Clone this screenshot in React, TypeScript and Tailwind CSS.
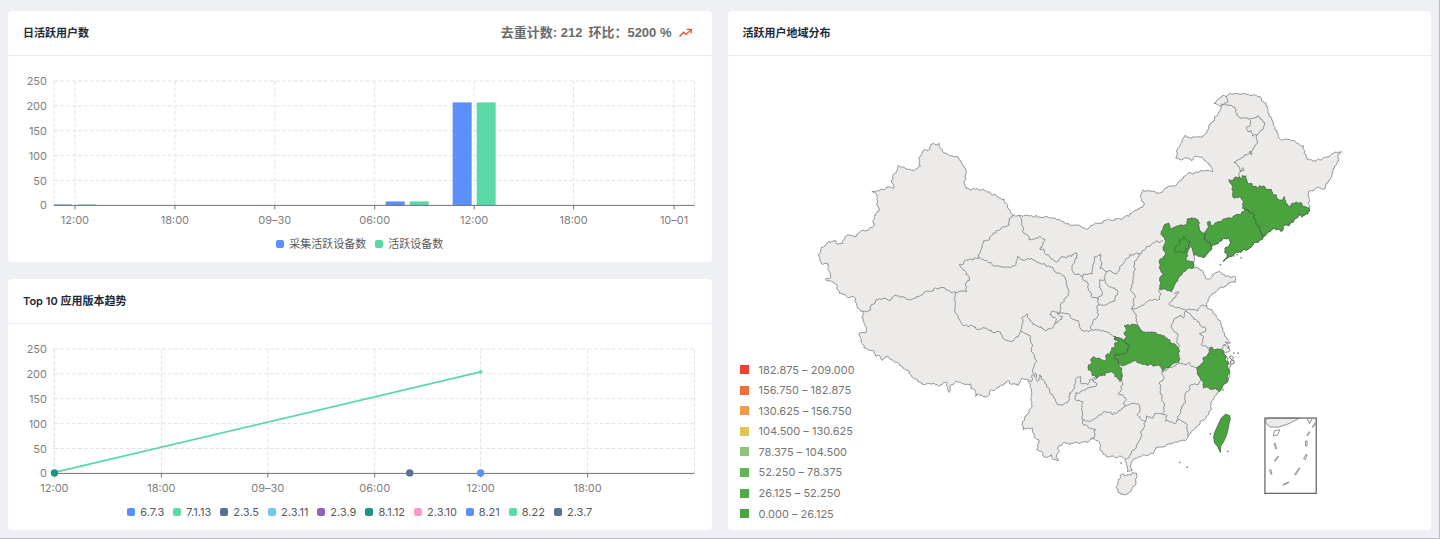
import React from 'react';

type LegendItem = { label: string; color: string };
type Tick = { x: number; label: string };

const PLOT = { left: 46, right: 687, top: 25, bottom: 149.5, max: 250 };
const Y_TICKS = [0, 50, 100, 150, 200, 250];

const toY = (value: number) =>
  PLOT.bottom - (value / PLOT.max) * (PLOT.bottom - PLOT.top);

const ACTIVE_TICKS: Tick[] = [
  { x: 67, label: '12:00' },
  { x: 167, label: '18:00' },
  { x: 267, label: '09–30' },
  { x: 367, label: '06:00' },
  { x: 466.5, label: '12:00' },
  { x: 566, label: '18:00' },
  { x: 666.5, label: '10–01' },
];

const ACTIVE_BARS = [
  { x: 46, width: 18, value: 2, color: '#5b8ff9' },
  { x: 70, width: 18, value: 2, color: '#5ad8a6' },
  { x: 378, width: 19, value: 8, color: '#5b8ff9' },
  { x: 402, width: 19, value: 8, color: '#5ad8a6' },
  { x: 445, width: 19, value: 207, color: '#5b8ff9' },
  { x: 469, width: 19, value: 207, color: '#5ad8a6' },
];

const ACTIVE_LEGEND: LegendItem[] = [
  { label: '采集活跃设备数', color: '#5b8ff9' },
  { label: '活跃设备数', color: '#5ad8a6' },
];

const VERSION_TICKS: Tick[] = [
  { x: 46.5, label: '12:00' },
  { x: 153.5, label: '18:00' },
  { x: 260, label: '09–30' },
  { x: 367, label: '06:00' },
  { x: 473, label: '12:00' },
  { x: 580, label: '18:00' },
];

const VERSION_LEGEND: LegendItem[] = [
  { label: '6.7.3', color: '#5b8ff9' },
  { label: '7.1.13', color: '#5ad8a6' },
  { label: '2.3.5', color: '#5d7092' },
  { label: '2.3.11', color: '#6dc8ec' },
  { label: '2.3.9', color: '#9063bd' },
  { label: '8.1.12', color: '#1e9483' },
  { label: '2.3.10', color: '#ff99c3' },
  { label: '8.21', color: '#5b8ff9' },
  { label: '8.22', color: '#5ad8a6' },
  { label: '2.3.7', color: '#5d7092' },
];

const MAP_LEGEND: LegendItem[] = [
  { label: '182.875 – 209.000', color: '#ea4335' },
  { label: '156.750 – 182.875', color: '#ee6f3c' },
  { label: '130.625 – 156.750', color: '#f29a4b' },
  { label: '104.500 – 130.625', color: '#e0c556' },
  { label: '78.375 – 104.500', color: '#8cc47c' },
  { label: '52.250 – 78.375', color: '#62b557' },
  { label: '26.125 – 52.250', color: '#52ab49' },
  { label: '0.000 – 26.125', color: '#4ba340' },
];

// Map shapes, one "x,y" pair per vertex
const MAINLAND =
  '2454,765 2463,758 2465,742 2478,735 2487,725 2493,728 2506,721 2512,733 2528,731 2535,712 2542,706 2560,709 2590,691 2623,673 2623,650 2638,633 2633,605 2629,583 2616,574 2643,568 2668,560 2680,566 2684,560 2677,550 2685,520 2696,496 2715,504 2748,507 2762,498 2761,470 2767,456 2790,448 2793,433 2802,430 2809,435 2818,430 2818,440 2840,460 2850,468 2868,469 2882,482 2893,502 2900,515 2897,535 2892,550 2898,565 2915,570 2960,574 2990,589 3007,599 3013,597 3022,622 3038,648 ' +
  '3058,647 3100,651 3140,651 3172,660 3195,669 3220,677 3240,678 3257,687 3280,675 3315,662 3360,658 3388,650 3410,632 3427,622 3435,612 3425,600 3422,585 3430,570 3450,574 3480,580 3500,562 3530,556 3540,543 3552,530 3560,525 3590,516 3620,512 3640,515 3635,502 3622,488 3600,472 3585,470 3575,482 3560,474 3540,478 3528,474 3532,458 3545,430 3558,406 3575,415 3600,410 3620,400 3628,375 3645,350 3660,332 3665,320 3657,315 3643,310 3655,297 3670,287 3700,282 3732,280 ' +
  '3750,286 3778,290 3795,308 3805,328 3815,352 3825,380 3835,402 3840,416 3865,418 3890,428 3912,438 3914,460 3922,478 3950,482 3980,472 4000,460 4025,454 4015,466 4018,480 4005,502 3998,525 3985,548 3972,568 3948,565 3940,573 3926,575 3927,595 3929,625 3925,642 3908,652 3898,642 3890,655 3875,668 3850,680 3848,693 3820,687 3808,695 3790,712 3770,728 3745,748 3715,758 3695,770 3672,785 3683,765 3675,755 3692,732 3685,715 3668,718 3655,732 3636,742 3625,760 3608,773 ' +
  '3590,765 3582,765 3585,780 3582,788 3582,802 3595,805 3610,815 3617,835 3630,838 3645,820 3660,815 3680,830 3708,832 3706,848 3685,850 3665,862 3645,878 3625,900 3620,915 3640,935 3655,960 3670,995 3680,1012 3692,1030 3672,1035 3685,1042 3692,1052 3675,1058 3670,1052 3680,1070 3688,1090 3690,1115 3680,1150 3658,1175 3645,1190 3633,1210 3635,1230 3620,1250 3600,1275 3580,1292 3565,1308 3560,1320 3535,1328 3510,1332 3490,1342 3475,1342 3460,1362 3440,1368 3415,1372 3398,1385 3392,1398 3398,1413 3382,1415 3380,1395 3378,1378 ' +
  '3365,1370 3345,1372 3315,1365 3302,1352 3300,1332 3275,1318 3262,1328 3235,1330 3210,1335 3195,1328 3175,1342 3175,1383 3160,1380 3155,1365 3135,1372 3125,1355 3110,1350 3117,1320 3102,1310 3098,1285 3070,1290 3068,1270 3080,1245 3096,1220 3096,1190 3095,1170 3090,1160 3085,1140 3067,1135 3055,1158 3025,1142 3005,1155 2975,1170 2965,1188 2927,1190 2925,1170 2912,1165 2912,1152 2895,1155 2868,1145 2855,1155 2848,1178 2843,1150 2815,1158 2780,1152 2772,1155 2750,1138 2720,1110 2700,1098 2670,1075 2658,1070 2648,1082 2610,1052 2592,1045 2585,1018 2578,1000 2597,1000 2597,980 2586,955 2590,935 2570,918 2568,897 2540,890 2518,880 2512,860 2495,845 2477,840 2493,833 2487,815 2485,792 2465,792 2460,775';

const BORDERS = [
  // Xinjiang
  '2590,935 2613,930 2628,900 2670,903 2680,890 2720,898 2760,888 2780,874 2830,863 2868,877 2900,876 2896,852 2908,842 2898,815 2885,805 2878,795 2935,775 2945,748 2952,722 2970,718 2980,700 3005,683 3028,675 3028,655 3038,648',
  // Qinghai
  '2935,775 2960,782 2985,798 3020,803 3035,802 3048,795 3053,770 3070,780 3095,775 3120,790 3150,800 3180,820 3198,835 3205,865 3198,895 3182,915 3182,935 3155,935 3150,945 3170,958 3165,972',
  '2868,877 2863,895 2867,910 2867,940 2885,968 2930,988 2945,987 2980,998 2995,995 3015,1020 3035,1025 3055,1012 3063,995 3065,955 3082,942 3100,975 3130,988 3155,988 3165,972',
  // Tibet, Sichuan
  '3063,995 3085,1005 3098,1040 3105,1075 3105,1130 3097,1125 3095,1145 3085,1140',
  '3105,1120 3113,1145 3120,1125 3135,1150 3150,1170 3162,1195 3178,1215 3205,1207 3208,1180 3225,1165 3230,1135 3242,1130 3245,1152 3265,1155 3270,1140 3292,1133',
  '3165,972 3188,950 3172,942 3188,940 3205,942 3215,955 3235,962 3245,988 3275,990 3280,965 3297,945 3295,915 3325,912 3347,900 3352,870 3335,862 3318,850 3315,840 3300,840 3298,862 3308,880 3295,900 3295,915',
  '3275,990 3305,995 3330,1000 3345,1010 3370,1023',
  // Ningxia, Gansu
  '3295,900 3275,890 3265,865 3265,850 3245,830 3278,822 3280,800 3285,770 3302,762 3305,785 3300,805 3320,815 3315,840',
  '3058,647 3070,690 3088,720 3120,710 3135,718 3130,735 3120,748 3145,765 3170,787 3190,772 3215,770 3232,760 3232,775 3218,795 3220,815 3245,830',
  // Shaanxi, Shanxi
  '3320,815 3350,822 3360,805 3375,785 3390,765 3418,762 3440,740 3480,728 3490,722',
  '3418,762 3405,790 3400,830 3400,880 3395,928 3408,952 3413,975',
  '3395,928 3435,912 3455,902 3480,898 3480,868',
  // Guizhou
  '3300,1128 3278,1142 3292,1152 3288,1160 3265,1165 3255,1172 3228,1178 3227,1200 3248,1205 3245,1230 3248,1258 3265,1263 3295,1250 3315,1235 3340,1245 3365,1230 3377,1218',
  '3248,1258 3248,1270 3265,1280 3288,1290 3275,1318',
  '3367,1125 3367,1142 3365,1170 3355,1182 3372,1190 3380,1200 3370,1212 3377,1218 3400,1210 3415,1212 3422,1235 3412,1245 3425,1260 3438,1262 3430,1290 3415,1330 3395,1360 3380,1378',
  // Hunan, Jiangxi, Fujian
  '3438,1262 3440,1248 3460,1255 3470,1240 3488,1243 3488,1205 3482,1180 3478,1150 3490,1140 3488,1115 3520,1100 3542,1092 3560,1095 3568,1088 3575,1100 3595,1102',
  '3488,1243 3502,1248 3498,1265 3530,1268 3542,1230 3555,1210 3555,1188 3570,1158 3590,1155 3608,1142',
  '3533,1262 3558,1270 3565,1308',
  // Anhui, Henan, Jiangsu, Shandong
  '3535,1060 3532,1030 3535,1010 3520,990 3515,975 3530,955 3542,945 3550,955 3558,933 3530,925 3508,912 3520,898 3538,877 3523,880',
  '3558,933 3565,928 3595,932 3608,915 3620,918',
  '3558,933 3575,948 3592,965 3605,980 3618,985 3618,995 3600,1000 3612,1015 3605,1035 3628,1045 3640,1042',
  '3672,1035 3665,1052',
  // Heilongjiang
  '3665,320 3685,303 3680,288',
  '3665,312 3685,315 3705,322 3712,345 3725,355 3750,358 3775,348 3795,368 3788,390 3772,405 3773,430 3760,445 3755,465 3752,453 3730,472 3703,488 3720,502 3718,530',
  '3750,358 3752,375 3740,385 3745,395 3755,392 3758,408 3772,405',
  '3722,513 3730,503 3733,512 3722,515',
];

const ACTIVE_PROVINCES = [
  // Jilin
  '3688,538 3700,543 3705,533 3720,530 3725,538 3728,527 3740,528 3745,550 3757,551 3760,560 3770,560 3775,565 3780,557 3795,560 3798,567 3815,568 3822,585 3830,585 3832,597 3840,600 3848,602 3853,590 3858,602 3865,618 3875,622 3875,612 3885,610 3890,606 3897,610 3905,608 3910,620 3918,620 3929,625 3925,642 3908,652 3898,642 3890,655 3875,668 3850,680 3848,693 3820,687 3808,695 3790,712 3780,680 3765,645 3735,628 3728,625 3730,610 3725,592 3718,591 3705,595 3697,570 3697,556 3690,548',
  // Liaoning
  '3790,712 3770,728 3745,748 3715,758 3695,770 3672,785 3683,765 3675,755 3692,732 3685,715 3668,718 3655,732 3636,742 3630,728 3615,720 3615,702 3625,685 3622,668 3632,665 3634,675 3640,678 3650,668 3665,665 3672,657 3685,655 3700,652 3710,645 3725,640 3735,628 3765,645 3780,680',
  // Hebei
  '3615,702 3598,692 3600,670 3595,660 3585,655 3572,656 3562,658 3562,672 3550,677 3542,675 3525,682 3510,688 3508,670 3500,672 3490,680 3487,692 3485,705 3495,715 3498,730 3490,745 3498,765 3490,772 3480,780 3480,800 3490,820 3480,840 3480,868 3500,870 3515,877 3520,866 3525,855 3535,835 3547,822 3560,810 3582,802 3582,788 3562,785 3562,760 3572,740 3578,745 3582,765 3590,765 3608,773 3625,760 3636,742 3630,728 3615,720',
  // Beijing
  '3552,710 3560,720 3572,725 3566,735 3570,745 3557,748 3555,758 3542,754 3528,758 3524,748 3530,738 3540,733 3538,720 3548,720',
  // Hubei
  '3373,978 3385,973 3388,979 3400,973 3413,975 3420,988 3434,997 3450,998 3466,997 3480,1005 3495,1009 3510,1020 3512,1033 3524,1032 3532,1040 3538,1050 3536,1063 3540,1075 3538,1088 3522,1092 3510,1100 3498,1106 3488,1115 3485,1104 3475,1095 3462,1100 3455,1094 3442,1098 3425,1092 3412,1088 3405,1080 3390,1090 3370,1098 3355,1090 3345,1065 3362,1064 3380,1058 3390,1040 3370,1023 3380,1010 3373,1002 3380,988',
  // Chongqing
  '3345,1010 3370,1023 3390,1040 3380,1058 3362,1064 3345,1065 3355,1090 3365,1105 3367,1125 3360,1145 3353,1133 3345,1130 3345,1120 3330,1117 3320,1118 3315,1128 3300,1125 3292,1135 3284,1127 3278,1128 3275,1115 3265,1110 3267,1095 3277,1090 3272,1080 3282,1070 3290,1076 3300,1075 3310,1082 3320,1080 3320,1065 3332,1062 3335,1045 3345,1042 3345,1030 3355,1027 3343,1018',
  // Zhejiang
  '3635,1042 3645,1050 3655,1047 3670,1052 3680,1070 3676,1080 3688,1090 3684,1102 3690,1115 3683,1130 3680,1150 3668,1158 3658,1175 3648,1165 3635,1170 3620,1162 3610,1165 3612,1150 3605,1140 3598,1130 3593,1120 3595,1102 3608,1090 3612,1082 3610,1074 3618,1070 3628,1060 3628,1050',
];

const TAIWAN =
  'M3678 1243L3690 1248L3692 1258L3688 1272L3685 1290L3680 1308L3672 1326L3663 1340L3662 1358L3655 1342L3645 1330L3642 1312L3645 1298L3655 1276L3664 1256Z';

const HAINAN =
  '3370,1422 3410,1420 3412,1432 3400,1460 3388,1478 3375,1487 3355,1478 3350,1460 3355,1440';

const ISLETS = [
  [3630, 1302],
  [3538, 1388],
  [3560, 1402],
  [3682, 1355],
  [3362, 1390],
  [3668, 1170],
  [3700, 768],
  [3710, 764],
  [3722, 774],
  [3660, 795],
  [3700, 1060],
  [3713, 1060],
];

type Point = [number, number];

// Splits an edge in the middle with a small offset; the same edge always
// gets the same offset, so neighbours keep a common border.
function splitEdge(a: Point, b: Point, amount: number): Point[] {
  const [dx, dy] = [b[0] - a[0], b[1] - a[1]];
  if (Math.hypot(dx, dy) < 6) return [a];
  const sum = a[0] + b[0] + (a[1] + b[1]) * 1.7;
  const side = a[0] < b[0] || (a[0] === b[0] && a[1] < b[1]) ? 1 : -1;
  const shift = Math.sin(sum * 12.9898) * amount * side;
  const mid: Point = [
    (a[0] + b[0]) / 2 - dy * shift,
    (a[1] + b[1]) / 2 + dx * shift,
  ];
  return [...splitEdge(a, mid, 0.25), ...splitEdge(mid, b, 0.25)];
}

function toPath(shape: string, closed = false) {
  const points = shape
    .trim()
    .split(/\s+/)
    .map((pair) => pair.split(',').map(Number) as Point);
  const last = points[points.length - 1];
  const ends = closed ? [...points, points[0]] : points;
  const rough = ends
    .slice(0, -1)
    .flatMap((point, i) => splitEdge(point, ends[i + 1], 0.1));
  if (!closed) rough.push(last);
  const d = rough.map(([x, y]) => `${x.toFixed(1)} ${y.toFixed(1)}`).join('L');
  return `M${d}${closed ? 'Z' : ''}`;
}

function RiseIcon() {
  return (
    <svg
      viewBox="0 0 16 12"
      className="ml-1.5 h-3 w-4"
      fill="none"
      stroke="#f04a32"
      strokeWidth="1.3"
      aria-hidden="true"
    >
      <path d="M1.5 9.5L5.6 5.2L8 7.6L13 2.6M8.8 2.4H13.2V6.6" />
    </svg>
  );
}

function Card({
  title,
  extra,
  children,
}: {
  title: string;
  extra?: React.ReactNode;
  children: React.ReactNode;
}) {
  return (
    <section className="overflow-hidden rounded bg-white">
      <header className="flex h-[45px] items-center justify-between border-b border-[#e9ebee] pl-[15px] pr-[18px]">
        <h2 className="text-[11px] font-semibold text-[#1f2a37]">{title}</h2>
        {extra}
      </header>
      {children}
    </section>
  );
}

function Legend({ items }: { items: LegendItem[] }) {
  return (
    <ul className="flex h-6 items-center justify-center gap-[9px] text-[11px] text-[#595959]">
      {items.map((item) => (
        <li key={item.label} className="flex items-center gap-[5px]">
          <span
            className="size-2 rounded-xs"
            style={{ backgroundColor: item.color }}
          />
          {item.label}
        </li>
      ))}
    </ul>
  );
}

function Chart({
  label,
  ticks,
  children,
}: {
  label: string;
  ticks: Tick[];
  children: React.ReactNode;
}) {
  return (
    <svg
      viewBox="0 0 704 176"
      className="block h-auto w-full"
      role="img"
      aria-label={label}
    >
      <g stroke="#dfe6e8" strokeDasharray="4 2">
        {Y_TICKS.slice(1).map((value) => (
          <line
            key={value}
            x1={PLOT.left}
            x2={PLOT.right}
            y1={toY(value)}
            y2={toY(value)}
          />
        ))}
        {[PLOT.left, ...ticks.map((tick) => tick.x), PLOT.right].map((x) => (
          <line key={x} x1={x} x2={x} y1={PLOT.top} y2={PLOT.bottom} />
        ))}
      </g>
      <g fill="#808080" fontSize="11">
        {Y_TICKS.map((value) => (
          <text key={value} x="39" y={toY(value) + 4} textAnchor="end">
            {value}
          </text>
        ))}
        {ticks.map((tick) => (
          <text key={tick.x} x={tick.x} y="168" textAnchor="middle">
            {tick.label}
          </text>
        ))}
      </g>
      {children}
      <g stroke="#6e7079">
        <line
          x1={PLOT.left}
          x2={PLOT.right}
          y1={PLOT.bottom}
          y2={PLOT.bottom}
        />
        {ticks.map((tick) => (
          <line
            key={tick.x}
            x1={tick.x}
            x2={tick.x}
            y1={PLOT.bottom}
            y2={PLOT.bottom + 4}
          />
        ))}
      </g>
    </svg>
  );
}

function ActiveUsersCard() {
  return (
    <Card
      title="日活跃用户数"
      extra={
        <div className="flex items-center font-['Liberation_Sans','Noto_Sans_CJK_SC',sans-serif] text-[13px] font-semibold text-[#6b6b6b]">
          <span className="mr-1.5">去重计数: 212</span>
          <span>环比：5200 %</span>
          <RiseIcon />
        </div>
      }
    >
      <Chart label="日活跃用户数" ticks={ACTIVE_TICKS}>
        {ACTIVE_BARS.map((bar) => (
          <rect
            key={bar.x}
            x={bar.x}
            y={toY(bar.value)}
            width={bar.width}
            height={PLOT.bottom - toY(bar.value)}
            fill={bar.color}
          />
        ))}
      </Chart>
      <div className="pb-1.5">
        <Legend items={ACTIVE_LEGEND} />
      </div>
    </Card>
  );
}

function VersionTrendCard() {
  return (
    <Card title="Top 10 应用版本趋势">
      <div className="relative">
        <Chart label="Top 10 应用版本趋势" ticks={VERSION_TICKS}>
          <line
            x1="46.5"
            y1={toY(2)}
            x2="473"
            y2={toY(204)}
            stroke="#5ad8a6"
            strokeWidth="1.6"
          />
          <circle cx="473" cy={toY(204)} r="1.8" fill="#5ad8a6" />
        </Chart>
        <svg
          viewBox="0 0 704 176"
          className="absolute inset-0 h-auto w-full"
          aria-hidden="true"
        >
          <circle cx="46.5" cy={toY(1)} r="3.7" fill="#1e9483" />
          <circle cx="402" cy={toY(1)} r="3.7" fill="#5d7092" />
          <circle cx="473" cy={toY(1)} r="3.7" fill="#5b8ff9" />
        </svg>
      </div>
      <div className="pb-1.5">
        <Legend items={VERSION_LEGEND} />
      </div>
    </Card>
  );
}

function ChinaMap() {
  return (
    <svg
      viewBox="2184 168 2112 1422"
      className="block h-auto w-full"
      role="img"
      aria-label="活跃用户地域分布"
    >
      <g stroke="#6f6f6f" strokeWidth="2.2" strokeLinejoin="round" fill="none">
        <path d={toPath(MAINLAND, true)} fill="#ecebea" />
        <path d={toPath(HAINAN, true)} fill="#ecebea" />
        {BORDERS.map((border) => (
          <path key={border} d={toPath(border)} />
        ))}
        <g fill="#4ba340" stroke="#3f5c3c">
          {ACTIVE_PROVINCES.map((province) => (
            <path key={province} d={toPath(province, true)} />
          ))}
          <path d={TAIWAN} />
        </g>
        {ISLETS.map(([x, y]) => (
          <path key={`${x}-${y}`} d={`M${x} ${y}l4 -1l-1 3z`} />
        ))}
        {/* Zhoushan */}
        <path
          d="M3688 1072l8 -4l6 6l-5 6zM3692 1084l10 -2l2 8l-9 4zM3683 1034l6 8l-4 6M3676 1026l9 4"
          strokeWidth="3"
        />
      </g>
      {/* South China Sea inset */}
      <g fill="none" stroke="#6f6f6f" strokeWidth="2.2">
        <path
          d="M3797 1262L3806 1255H3900L3870 1271L3838 1282L3812 1282L3800 1272Z"
          fill="#ecebea"
        />
        <path d="M3922 1256L3930 1272L3938 1256" fill="#ecebea" />
        <rect x="3796" y="1255" width="154" height="226" strokeWidth="4" />
        <path d="M3825 1293L3840 1290L3834 1306L3821 1309ZM3823 1332L3827 1331L3831 1347L3828 1347ZM3824 1384L3835 1369L3837 1371L3827 1384ZM3809 1411L3814 1410L3817 1424L3814 1423ZM3850 1455L3867 1447L3868 1449L3852 1456ZM3885 1425L3898 1405L3901 1406L3888 1426ZM3912 1378L3919 1364L3922 1365L3918 1379ZM3918 1324L3923 1324L3922 1339L3918 1339ZM3922 1307L3929 1296L3931 1297L3924 1308ZM3938 1282L3947 1269L3949 1271L3940 1283Z" />
      </g>
    </svg>
  );
}

function RegionCard() {
  return (
    <Card title="活跃用户地域分布">
      <div className="relative">
        <ChinaMap />
        <ul className="absolute bottom-2.5 left-3 flex h-[156px] flex-col justify-between text-[11px] leading-3 text-[#757575]">
          {MAP_LEGEND.map((item) => (
            <li key={item.label} className="flex items-center gap-2.5">
              <span
                className="size-[9px]"
                style={{ backgroundColor: item.color }}
              />
              {item.label}
            </li>
          ))}
        </ul>
      </div>
    </Card>
  );
}

export default function App() {
  return (
    <main className="grid grid-cols-2 items-start gap-4 border-b border-r border-[#b9bcc2] bg-[#eff0f3] px-2 pb-2 pt-[11px] font-[Inter,'Noto_Sans_CJK_SC',sans-serif]">
      <div className="flex flex-col gap-[17px]">
        <ActiveUsersCard />
        <VersionTrendCard />
      </div>
      <RegionCard />
    </main>
  );
}
